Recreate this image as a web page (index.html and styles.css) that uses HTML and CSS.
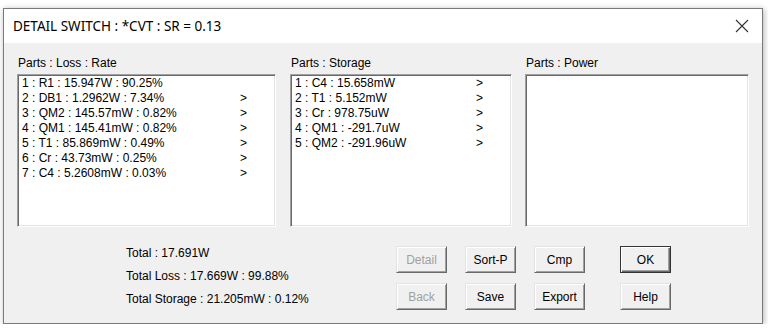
FILE: index.html
```html
<!DOCTYPE html>
<html>

<head>
    <meta charset="UTF-8">
    <title>Detail Switch</title>
    <link rel="stylesheet" href="styles.css">
</head>

<body>
    <div class="window">
        <div class="titlebar">
            <span class="title">DETAIL SWITCH : *CVT : SR = 0.13</span>
            <svg class="close" width="14" height="14" viewBox="0 0 14 14">
                <path d="M1 1 L13 13 M13 1 L1 13" stroke="#333" stroke-width="1.1" fill="none" />
            </svg>
        </div>
        <div class="client">
            <div class="panels">
                <div class="panel loss">
                    <div class="caption">Parts : Loss : Rate</div>
                    <div class="listbox">
                        <div class="item"><span>1 : R1 : 15.947W : 90.25%</span></div>
                        <div class="item"><span>2 : DB1 : 1.2962W : 7.34%</span><span class="arrow">&gt;</span></div>
                        <div class="item"><span>3 : QM2 : 145.57mW : 0.82%</span><span class="arrow">&gt;</span></div>
                        <div class="item"><span>4 : QM1 : 145.41mW : 0.82%</span><span class="arrow">&gt;</span></div>
                        <div class="item"><span>5 : T1 : 85.869mW : 0.49%</span><span class="arrow">&gt;</span></div>
                        <div class="item"><span>6 : Cr : 43.73mW : 0.25%</span><span class="arrow">&gt;</span></div>
                        <div class="item"><span>7 : C4 : 5.2608mW : 0.03%</span><span class="arrow">&gt;</span></div>
                    </div>
                </div>
                <div class="panel storage">
                    <div class="caption">Parts : Storage</div>
                    <div class="listbox">
                        <div class="item"><span>1 : C4 : 15.658mW</span><span class="arrow">&gt;</span></div>
                        <div class="item"><span>2 : T1 : 5.152mW</span><span class="arrow">&gt;</span></div>
                        <div class="item"><span>3 : Cr : 978.75uW</span><span class="arrow">&gt;</span></div>
                        <div class="item"><span>4 : QM1 : -291.7uW</span><span class="arrow">&gt;</span></div>
                        <div class="item"><span>5 : QM2 : -291.96uW</span><span class="arrow">&gt;</span></div>
                    </div>
                </div>
                <div class="panel power">
                    <div class="caption">Parts : Power</div>
                    <div class="listbox"></div>
                </div>
            </div>

            <div class="footer">
                <div class="totals">
                    <div>Total : 17.691W</div>
                    <div>Total Loss : 17.669W : 99.88%</div>
                    <div>Total Storage : 21.205mW : 0.12%</div>
                </div>
                <div class="buttons">
                    <div class="btn-col">
                        <button class="btn" disabled>Detail</button>
                        <button class="btn" disabled>Back</button>
                    </div>
                    <div class="btn-col">
                        <button class="btn">Sort-P</button>
                        <button class="btn">Save</button>
                    </div>
                    <div class="btn-col">
                        <button class="btn">Cmp</button>
                        <button class="btn">Export</button>
                    </div>
                    <div class="btn-col last">
                        <button class="btn default">OK</button>
                        <button class="btn">Help</button>
                    </div>
                </div>
            </div>
        </div>
    </div>
</body>

</html>
```

FILE: styles.css
```css
body {
    margin: 0;
    background: #fff;
    font-family: 'Liberation Sans', Arial, sans-serif;
    font-size: 12px;
    color: #000;
}

.window {
    box-sizing: border-box;
    width: 760px;
    height: 316px;
    margin: 8px 0 0 3px;
    border: 1px solid #7a7a7a;
    background: #f0f0f0;
    box-shadow: 1px 1px 6px rgba(0, 0, 0, 0.3);
}

.titlebar {
    height: 34px;
    background: #fff;
    display: flex;
    align-items: center;
    justify-content: space-between;
    padding: 0 13px 0 9px;
}

.title {
    font-family: 'Noto Sans', sans-serif;
    font-size: 13.5px;
    color: #000;
}

.close {
    display: block;
}

.client {
    padding: 13px 0 0 13px;
}

.panels {
    display: flex;
}

.panel.loss {
    width: 259px;
    margin-right: 14px;
}

.panel.storage {
    width: 222px;
    margin-right: 13px;
}

.panel.power {
    width: 224px;
}

.caption {
    line-height: 14px;
    margin-bottom: 4px;
    padding-left: 1px;
}

.listbox {
    box-sizing: border-box;
    height: 153px;
    background: #fff;
    border: 1px solid;
    border-color: #a0a0a0 #fff #fff #a0a0a0;
    box-shadow: inset 1px 1px 0 #696969, inset -1px -1px 0 #e3e3e3;
    padding: 1px 0 0 4px;
}

.item {
    display: flex;
    justify-content: space-between;
    line-height: 15px;
    padding-right: 28px;
    white-space: nowrap;
}

.footer {
    display: flex;
    align-items: flex-start;
}

.totals {
    width: 270px;
    margin: 15px 0 0 109px;
    line-height: 23px;
}

.buttons {
    display: flex;
    margin-top: 19px;
}

.btn-col {
    display: flex;
    flex-direction: column;
    gap: 10px;
    margin-right: 18px;
}

.btn-col.last {
    margin-left: 17px;
    margin-right: 0;
}

.btn {
    box-sizing: border-box;
    width: 51px;
    height: 27px;
    padding: 0;
    font-family: 'Liberation Sans', Arial, sans-serif;
    font-size: 12px;
    color: #000;
    background: #f0f0f0;
    border: 1px solid;
    border-color: #e3e3e3 #696969 #696969 #e3e3e3;
    box-shadow: inset 1px 1px 0 #fff, inset -1px -1px 0 #a0a0a0;
}

.btn:disabled {
    color: #a0a0a0;
}

.btn.default {
    border-color: #333;
    box-shadow: inset 1px 1px 0 #fff, inset -1px -1px 0 #696969, inset -2px -2px 0 #a0a0a0;
}
```
